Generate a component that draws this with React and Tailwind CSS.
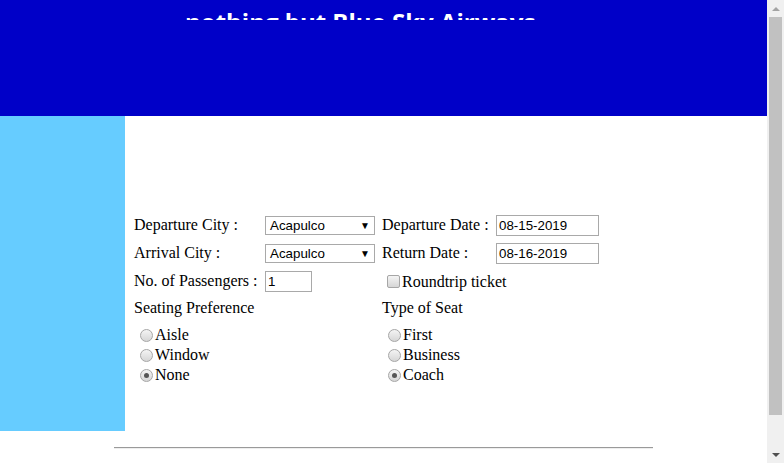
import React from "react";

function Select({ value }) {
  return (
    <div className="relative w-[110px] h-[19px] border border-[#a9a9a9] bg-white font-['Liberation_Sans'] text-[13.33px] leading-[17px] text-black pl-[4px]">
      {value}
      <span className="absolute right-[4px] top-[0px] text-[10px] leading-[17px]">▼</span>
    </div>
  );
}

function TextBox({ value, w }) {
  return (
    <div className={`${w} h-[21px] border border-[#a9a9a9] bg-white font-['Liberation_Sans'] text-[13.33px] leading-[19px] text-black pl-[2px]`}>
      {value}
    </div>
  );
}

function Radio({ checked, label }) {
  return (
    <div className="flex items-center h-[20px]">
      <span className="ml-[6px] w-[13px] h-[13px] rounded-full border border-[#a6a6a6] bg-gradient-to-b from-[#f4f4f4] to-[#d6d6d6] flex items-center justify-center">
        {checked && <span className="w-[5px] h-[5px] rounded-full bg-[#555]" />}
      </span>
      <span className="ml-[2px]">{label}</span>
    </div>
  );
}

export default function App() {
  return (
    <div className="font-['Liberation_Serif'] text-[16px] text-black bg-white min-h-[498px]">
      <div className="h-[116px] bg-[#0000c8] pl-[185px] pt-[8px]">
        <div className="h-[12px] overflow-hidden">
          <div className="font-['Open_Sans'] font-bold text-[24px] leading-[24px] text-white pt-[2px] whitespace-nowrap">
            nothing but Blue Sky Airways
          </div>
        </div>
      </div>
      <div className="flex h-[315px]">
        <div className="w-[125px] bg-[#66ccff]" />
        <div className="pl-[9px] pt-[95px]">
          <div className="grid grid-cols-[131px_117px_114px_103px] items-center">
            <div className="h-[28px] leading-[28px]">Departure City :</div>
            <div><Select value="Acapulco" /></div>
            <div className="h-[28px] leading-[28px]">Departure Date :</div>
            <div><TextBox value="08-15-2019" w="w-[103px]" /></div>

            <div className="h-[28px] leading-[28px]">Arrival City :</div>
            <div><Select value="Acapulco" /></div>
            <div className="h-[28px] leading-[28px]">Return Date :</div>
            <div><TextBox value="08-16-2019" w="w-[103px]" /></div>

            <div className="h-[28px] leading-[28px]">No. of Passengers :</div>
            <div><TextBox value="1" w="w-[47px]" /></div>
            <div className="col-span-2 flex items-center h-[28px]">
              <span className="ml-[5px] mt-[1px] w-[13px] h-[13px] rounded-[2px] border border-[#a6a6a6] bg-gradient-to-b from-[#f4f4f4] to-[#d6d6d6]" />
              <span className="ml-[2px] mt-[2px]">Roundtrip ticket</span>
            </div>
          </div>
          <div className="grid grid-cols-[248px_200px] mt-[1px]">
            <div>
              <div className="h-[24px] leading-[24px]">Seating Preference</div>
              <div className="mt-[5px]">
                <Radio label="Aisle" />
                <Radio label="Window" />
                <Radio checked label="None" />
              </div>
            </div>
            <div>
              <div className="h-[24px] leading-[24px]">Type of Seat</div>
              <div className="mt-[5px]">
                <Radio label="First" />
                <Radio label="Business" />
                <Radio checked label="Coach" />
              </div>
            </div>
          </div>
        </div>
      </div>
      <div className="ml-[114px] mt-[16px] w-[539px] h-[2px] border-t border-[#9a9a9a] border-b border-b-[#eeeeee]" />

      <div className="fixed right-0 top-0 w-[17px] h-[463px] bg-[#f0f0f0] flex flex-col items-center">
        <div className="h-[17px] flex items-center justify-center">
          <span className="w-0 h-0 border-l-[4px] border-r-[4px] border-b-[4px] border-l-transparent border-r-transparent border-b-[#a3a3a3]" />
        </div>
        <div className="w-[13px] h-[398px] bg-[#c1c1c1]" />
        <div className="flex-1" />
        <div className="h-[17px] flex items-center justify-center">
          <span className="w-0 h-0 border-l-[4px] border-r-[4px] border-t-[4px] border-l-transparent border-r-transparent border-t-[#505050]" />
        </div>
      </div>
    </div>
  );
}
